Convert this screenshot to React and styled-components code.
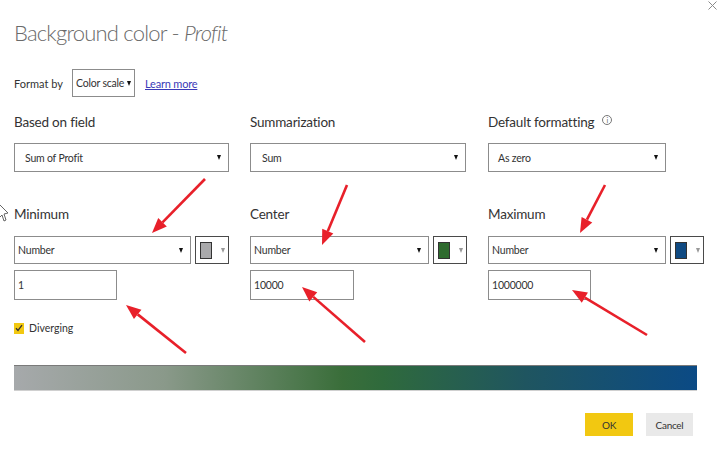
import styled, { createGlobalStyle } from "styled-components"

const Global = createGlobalStyle`
    html, body { margin : 0; padding : 0; background : #ffffff; }
    body { font-family : Lato, "Open Sans", sans-serif; }
`;
const Dialog = styled.div`
    position : relative;
    width : 722px;
    height : 453px;
    box-sizing : border-box;
    padding : 20px 14px 0 14px;
    background : #ffffff;
    overflow : hidden;
    color : #333333;
`;
const Close = styled.svg`
    position : absolute;
    top : 1px;
    right : 5px;
`;
const Title = styled.div`
    font-size : 22px;
    line-height : 26px;
    font-weight : 300;
    color : #6a6a6a;
    letter-spacing : -0.8px;
    white-space : nowrap;
    em { font-style : italic; }
`;
const FormatRow = styled.div`
    display : flex;
    align-items : center;
    margin-top : 23px;
    height : 28px;
    font-size : 11px;
`;
const FormatLabel = styled.span`
    width : 58px;
    color : #333;
`;
const LearnMore = styled.a`
    margin-left : 10px;
    color : #3a3ab8;
    text-decoration : underline;
    font-size : 11px;
    letter-spacing : -0.2px;
`;
const Grid = styled.div`
    display : grid;
    grid-template-columns : 236px 238px 1fr;
    margin-top : ${p => p.$top}px;
`;
const Label = styled.div`
    font-size : 13.5px;
    line-height : 18px;
    color : #333;
    display : flex;
    align-items : center;
    gap : 8px;
    letter-spacing : -0.2px;
`;
const Info = styled.span`
    display : inline-flex;
    width : 8px;
    height : 8px;
    border : 1px solid #777;
    border-radius : 50%;
    font-size : 7px;
    justify-content : center;
    align-items : center;
    color : #666;
    margin-top : -5px;
`;
const Select = styled.div`
    box-sizing : border-box;
    width : ${p => p.$w}px;
    height : ${p => p.$h}px;
    border : 1px solid #8c8c8c;
    background : #fff;
    display : flex;
    align-items : center;
    justify-content : space-between;
    padding : 0 ${p => p.$pr || 7}px 0 ${p => p.$pl}px;
    font-size : 10.5px;
    color : #333;
    white-space : nowrap;
    letter-spacing : -0.2px;
    margin-top : ${p => p.$top || 0}px;
`;
const Caret = styled.span`
    width : 0;
    height : 0;
    border-left : 2.5px solid transparent;
    border-right : 2.5px solid transparent;
    border-top : 5px solid ${p => p.$c || "#111"};
    margin-left : 3px;
`;
const PickRow = styled.div`
    display : flex;
    gap : 4px;
    margin-top : 13px;
`;
const ColorPick = styled.div`
    box-sizing : border-box;
    width : 34px;
    height : 28px;
    border : 1px solid #4a4a4a;
    display : flex;
    align-items : center;
    padding-left : 4px;
    gap : 6px;
`;
const Swatch = styled.span`
    width : 10px;
    height : 15px;
    border : 1px solid #333;
    background : ${p => p.$c};
`;
const Input = styled.div`
    box-sizing : border-box;
    width : ${p => p.$w}px;
    height : 30px;
    margin-top : 6px;
    border : 1px solid #8c8c8c;
    display : flex;
    align-items : center;
    padding-left : 3px;
    font-size : 10.5px;
    color : #333;
    letter-spacing : -0.2px;
`;
const Check = styled.div`
    display : flex;
    align-items : center;
    gap : 5px;
    margin-top : 21px;
    font-size : 10.5px;
    line-height : 14px;
`;
const Box = styled.span`
    width : 10px;
    height : 11px;
    background : #f2c811;
    display : flex;
    align-items : center;
    justify-content : center;
`;
const Gradient = styled.div`
    margin-top : 30px;
    width : 683px;
    height : 26px;
    box-sizing : border-box;
    border-top : 1px solid #7a7a7a;
    border-bottom : 1px solid #d0d0d0;
    background : linear-gradient(to right, #a6a9ab 0%, #8a998a 22%, #3a6e3a 48%, #2f6a3c 54%, #1f5560 75%, #0b4a85 100%);
`;
const Footer = styled.div`
    display : flex;
    justify-content : flex-end;
    gap : 13px;
    margin-top : 22px;
    padding-right : 15px;
`;
const Button = styled.div`
    width : ${p => p.$w}px;
    height : 23px;
    background : ${p => p.$bg};
    display : flex;
    align-items : center;
    justify-content : center;
    font-size : 10px;
    color : #333;
    letter-spacing : -0.3px;
`;
const Overlay = styled.svg`
    position : absolute;
    left : 0;
    top : 0;
    pointer-events : none;
`;

const arrows = [
    [205, 179, 152, 233],
    [186, 353, 126, 305],
    [347, 185, 322, 245],
    [365, 342, 302, 287],
    [605, 185, 580, 233],
    [647, 335, 572, 290],
];

function Arrow({ x1, y1, x2, y2 }) {
    const a = Math.atan2(y2 - y1, x2 - x1);
    const len = 15, wid = 6;
    const bx = x2 - len * Math.cos(a), by = y2 - len * Math.sin(a);
    const px = -Math.sin(a) * wid, py = Math.cos(a) * wid;
    return (
        <g>
            <line x1={x1} y1={y1} x2={bx} y2={by} stroke="#e8202a" strokeWidth="2.6" />
            <polygon points={`${x2},${y2} ${bx + px},${by + py} ${bx - px},${by - py}`} fill="#e8202a" />
        </g>
    );
}

function Stop({ label, sel, color, value, inputW }) {
    return (
        <div>
            <Label>{label}</Label>
            <PickRow>
                <Select $w={sel} $h={28} $pl={3}>Number<Caret /></Select>
                <ColorPick><Swatch $c={color} /><Caret $c="#999" /></ColorPick>
            </PickRow>
            <Input $w={inputW}>{value}</Input>
        </div>
    );
}

export default function App() {
    return (
        <Dialog>
            <Global />
            <Close width="9" height="9" viewBox="0 0 9 9">
                <path d="M0.5 0.5 L8.5 8.5 M8.5 0.5 L0.5 8.5" stroke="#8a8a8a" strokeWidth="1" />
            </Close>
            <Title>Background color - <em>Profit</em></Title>
            <FormatRow>
                <FormatLabel>Format by</FormatLabel>
                <Select $w={63} $h={28} $pl={3} $pr={4}>Color scale<Caret /></Select>
                <LearnMore>Learn more</LearnMore>
            </FormatRow>
            <Grid $top={16}>
                <div>
                    <Label>Based on field</Label>
                    <Select $w={215} $h={29} $pl={10} $top={12}>Sum of Profit<Caret /></Select>
                </div>
                <div>
                    <Label>Summarization</Label>
                    <Select $w={216} $h={29} $pl={11} $top={12}>Sum<Caret /></Select>
                </div>
                <div>
                    <Label>Default formatting <Info>i</Info></Label>
                    <Select $w={178} $h={29} $pl={9} $top={12}>As zero<Caret /></Select>
                </div>
            </Grid>
            <Grid $top={33}>
                <Stop label="Minimum" sel={177} color="#a9a9ab" value="1" inputW={103} />
                <Stop label="Center" sel={179} color="#2f6b2f" value="10000" inputW={104} />
                <Stop label="Maximum" sel={178} color="#104a82" value="1000000" inputW={103} />
            </Grid>
            <Check>
                <Box>
                    <svg width="8" height="8" viewBox="0 0 8 8"><path d="M1 4.2 L3 6.4 L7 1.2" fill="none" stroke="#333" strokeWidth="1.3" /></svg>
                </Box>
                Diverging
            </Check>
            <Gradient />
            <Footer>
                <Button $w={48} $bg="#f2c811">OK</Button>
                <Button $w={47} $bg="#e9e9e9">Cancel</Button>
            </Footer>
            <Overlay width="722" height="453">
                <path d="M0 205 L8 213 L4 214 L6 220 L4 221 L2 215 L0 217" fill="#fff" stroke="#555" strokeWidth="0.9" />
                {arrows.map(([x1, y1, x2, y2], i) => <Arrow key={i} x1={x1} y1={y1} x2={x2} y2={y2} />)}
            </Overlay>
        </Dialog>
    );
}
